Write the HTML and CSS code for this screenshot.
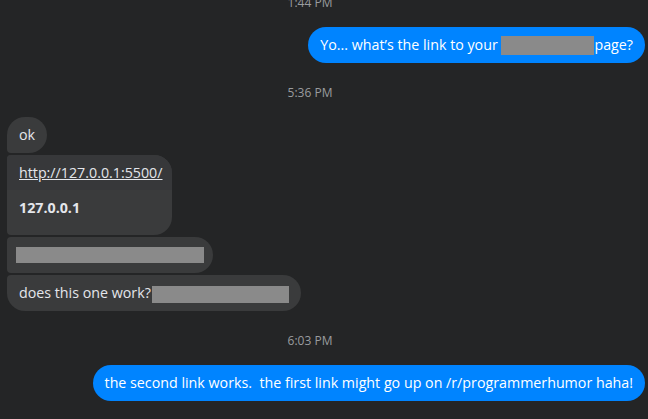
FILE: index.html
```html
<!DOCTYPE html>
<html>
<head>
<meta charset="utf-8">
<link rel="stylesheet" href="styles.css">
</head>
<body>
<div class="chat">
  <div class="ts">1:44 PM</div>
  <div class="row out">
    <div class="bubble blue">Yo... what’s the link to your <span class="redact r1"></span>page?</div>
  </div>

  <div class="ts">5:36 PM</div>
  <div class="group">
    <div class="bubble gray first">ok</div>
    <div class="bubble gray mid linkcard">
      <div class="link-top"><a class="url">http://127.0.0.1:5500/</a></div>
      <div class="link-bottom">127.0.0.1</div>
    </div>
    <div class="bubble gray mid redacted"><span class="redact r2"></span></div>
    <div class="bubble gray last">does this one work?<span class="redact r3"></span></div>
  </div>

  <div class="ts">6:03 PM</div>
  <div class="row out">
    <div class="bubble blue">the second link works.&nbsp; the first link might go up on /r/programmerhumor haha!</div>
  </div>
</div>
</body>
</html>
```

FILE: styles.css
```css
html, body {
  margin: 0;
  padding: 0;
  background: #242526;
  height: 100%;
  overflow: hidden;
}

body {
  font-family: "Open Sans", "Noto Sans", sans-serif;
  font-size: 14.25px;
  color: #e4e6eb;
}

.chat {
  display: flex;
  flex-direction: column;
  padding: 0 3px 0 7px;
  margin-top: -27px;
}

.ts {
  margin: 22px 0 16px;
  line-height: 16px;
  font-size: 12px;
  color: #9a9c9f;
  text-align: center;
  padding-right: 32px;
}

.row.out {
  display: flex;
  justify-content: flex-end;
}

.bubble {
  line-height: 20px;
  padding: 8px 12px;
  border-radius: 18px;
  white-space: nowrap;
}

.blue {
  background: #0084ff;
  color: #ffffff;
  padding: 8px 12px;
}

.group {
  display: flex;
  flex-direction: column;
  align-items: flex-start;
  gap: 2px;
}

.gray {
  background: #3a3b3c;
  color: #e4e6eb;
}

.first { border-radius: 18px 18px 18px 4px; }
.mid { border-radius: 4px 18px 18px 4px; }
.last { border-radius: 4px 18px 18px 18px; }

.linkcard {
  padding: 0;
  overflow: hidden;
  width: 165px;
}

.link-top {
  background: #37383a;
  padding: 8px 12px 7px;
}

.url {
  color: #e4e6eb;
  text-decoration: underline;
}

.link-bottom {
  padding: 8px 12px 17px;
  font-weight: 700;
}

.redacted {
  display: flex;
  padding: 10px 9px;
}

.redact {
  display: inline-block;
  background: #8a8a8a;
  vertical-align: middle;
}

.r1 { width: 93px; height: 19px; margin-top: -2px; }
.r2 { width: 188px; height: 16px; }
.r3 { width: 137px; height: 17px; margin-left: 1px; }
```
